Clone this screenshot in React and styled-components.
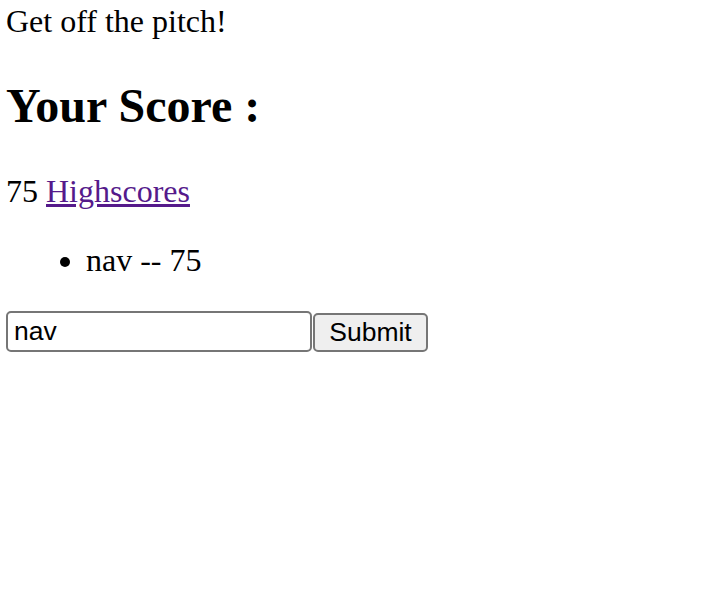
import React from "react";
import styled, { createGlobalStyle } from "styled-components";

const Global = createGlobalStyle`
  html, body { margin: 0; padding: 0; background: #fff; }
  body { font-family: "Liberation Serif", "Times New Roman", serif; font-size: 32px; color: #000; }
`;

const Page = styled.div`
  padding: 3px 6px;
`;

const Title = styled.div`
  font-size: 32px;
`;

const Heading = styled.h2`
  font-size: 48px;
  font-weight: bold;
  margin: 38px 0 40px;
`;

const ScoreLine = styled.p`
  margin: 32px 0;
`;

const Link = styled.a`
  color: #551a8b;
  text-decoration: underline;
`;

const List = styled.ul`
  margin: 31px 0 32px;
  padding-left: 80px;
`;

const Item = styled.li`
  list-style: disc;
`;

const Form = styled.form`
  display: flex;
  align-items: flex-start;
  margin: 0;
`;

const TextInput = styled.input`
  box-sizing: border-box;
  width: 306px;
  height: 41px;
  margin: 0;
  padding: 2px 6px;
  border: 2px solid #767676;
  border-radius: 5px;
  font-family: "Liberation Sans", Arial, sans-serif;
  font-size: 26.5px;
  color: #000;
  background: #fff;
  outline: none;
`;

const SubmitButton = styled.button`
  box-sizing: border-box;
  width: 115px;
  height: 39px;
  margin: 2px 0 0 1px;
  padding: 0 12px;
  border: 2px solid #767676;
  border-radius: 5px;
  background: #efefef;
  font-family: "Liberation Sans", Arial, sans-serif;
  font-size: 26.5px;
  color: #000;
`;

export default function App() {
  return (
    <>
      <Global />
      <Page>
        <Title>Get off the pitch!</Title>
        <Heading>Your Score :</Heading>
        <ScoreLine>
          75 <Link href="#highscores">Highscores</Link>
        </ScoreLine>
        <List>
          <Item>nav -- 75</Item>
        </List>
        <Form onSubmit={(e) => e.preventDefault()}>
          <TextInput type="text" defaultValue="nav" />
          <SubmitButton type="submit">Submit</SubmitButton>
        </Form>
      </Page>
    </>
  );
}
